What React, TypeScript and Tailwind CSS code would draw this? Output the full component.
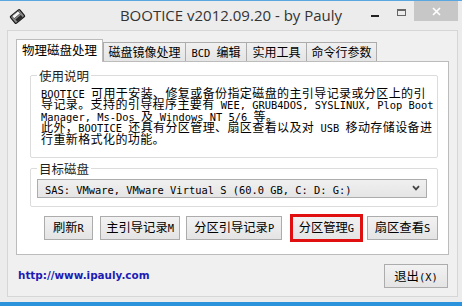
import type { ReactNode } from 'react'

// Latin runs use a narrow mono face, the rest a CJK face
function Mixed({ text }: { text: string }) {
  const parts = text.split(/([\x20-\x7e]+)/).filter(Boolean)
  return (
    <>
      {parts.map((p, i) =>
        /^[\x20-\x7e]+$/.test(p) ? (
          <span key={i} className="font-['DejaVu_Sans_Mono',monospace] text-[10.4px] tracking-normal whitespace-pre">
            {p}
          </span>
        ) : (
          <span key={i}>{p}</span>
        ),
      )}
    </>
  )
}

function WinButton({ label, className = '' }: { label: string; className?: string }) {
  return (
    <button
      className={`flex h-[24px] items-center justify-center border border-[#acacac] bg-gradient-to-b from-[#f2f2f2] to-[#e4e4e4] text-[12.3px] text-black ${className}`}
    >
      <span className="leading-[14px]">
        <Mixed text={label} />
      </span>
    </button>
  )
}

function GroupBox({ title, children, className = '' }: { title: string; children: ReactNode; className?: string }) {
  return (
    <fieldset className={`rounded-[2px] border border-[#dcdcdc] ${className}`}>
      <legend className="ml-[6px] px-[2px] text-[12.5px] leading-[15px] text-[#1e1e1e]">{title}</legend>
      {children}
    </fieldset>
  )
}

const lines = [
  'BOOTICE 可用于安装、修复或备份指定磁盘的主引导记录或分区上的引',
  '导记录。支持的引导程序主要有 WEE, GRUB4DOS, SYSLINUX, Plop Boot',
  'Manager, Ms-Dos 及 Windows NT 5/6 等。',
  '此外，BOOTICE 还具有分区管理、扇区查看以及对 USB 移动存储设备进',
  '行重新格式化的功能。',
]

const tabs = [
  { label: '磁盘镜像处理', w: 'w-[83px]' },
  { label: 'BCD 编辑', w: 'w-[62px]' },
  { label: '实用工具', w: 'w-[61px]' },
  { label: '命令行参数', w: 'w-[71px]' },
]

function AppIcon() {
  return (
    <svg width="17" height="17" viewBox="0 0 17 17">
      <g transform="rotate(-40 8.5 8.5)">
        <rect x="2.5" y="4" width="12" height="9" rx="1" fill="#8a8a8a" stroke="#1a1a1a" strokeWidth="1.2" />
        <rect x="4.5" y="4.6" width="8" height="3.4" fill="#f4f4f4" stroke="#333" strokeWidth="0.6" />
        <rect x="5" y="9.5" width="7" height="3" fill="#2a2a2a" />
      </g>
    </svg>
  )
}

export default function App() {
  return (
    <div className="flex h-[306px] w-[462px] flex-col overflow-hidden bg-[#ececec] font-['Noto_Sans_CJK_SC',sans-serif]">
      <div className="h-px bg-[#5aa6e0]" />

      {/* title bar */}
      <div className="grid h-[29px] grid-cols-[1fr_auto_1fr]">
        <div className="flex items-start pl-[9px] pt-[7px]">
          <AppIcon />
        </div>
        <div className="flex items-center pb-[1px] font-['Open_Sans',sans-serif] text-[15px] text-[#333]">
          BOOTICE v2012.09.20 - by Pauly
        </div>
        <div className="flex items-start justify-end pr-[4px]">
          <div className="flex h-[20px] w-[26px] items-center justify-center pt-[9px]">
            <div className="h-[2px] w-[8px] bg-[#222]" />
          </div>
          <div className="flex h-[20px] w-[26px] items-start justify-center pt-[8px]">
            <div className="h-[7px] w-[9px] border border-[#666] border-t-2" />
          </div>
          <div className="flex h-[20px] w-[44px] items-center justify-center bg-[#c7c7c7]">
            <svg width="9" height="9" viewBox="0 0 9 9">
              <path d="M1 1 L8 8 M8 1 L1 8" stroke="#fff" strokeWidth="1.6" />
            </svg>
          </div>
        </div>
      </div>

      {/* client area */}
      <div className="ml-[7px] mr-[4px] flex h-[267px] flex-col border border-[#d6d6d6] bg-[#f0f0f0] px-[8px] pt-[8px]">
        <div className="flex h-[22px] items-end">
          <div className="relative z-10 -mb-px flex h-[23px] w-[87px] items-center justify-center border border-b-0 border-[#bcbcbc] bg-white pb-[2px] text-[12.5px] text-black">
            物理磁盘处理
          </div>
          {tabs.map((t, i) => (
            <div
              key={t.label}
              className={`flex h-[19px] items-center justify-center border border-b-0 border-[#acacac] bg-gradient-to-b from-[#f0f0f0] to-[#e5e5e5] text-[12px] text-black ${t.w} ${i > 0 ? '-ml-px' : ''}`}
            >
              <span className="leading-[14px]">
                <Mixed text={t.label} />
              </span>
            </div>
          ))}
        </div>

        <div className="flex h-[194px] flex-col border border-[#bcbcbc] bg-white pl-[13px] pr-[10px] pt-[6px]">
          <GroupBox title="使用说明">
            <div className="mt-[4px] pb-[13px] pl-[10px] text-[12px] tracking-[0.4px] text-black">
              {lines.map((l) => (
                <div key={l} className="h-[11.4px] whitespace-nowrap leading-[11.4px]">
                  <Mixed text={l} />
                </div>
              ))}
            </div>
          </GroupBox>

          <GroupBox title="目标磁盘" className="mt-[3px]">
            <div className="px-[6px] pb-[8px] pt-[3px] pr-[10px]">
              <div className="flex h-[19px] items-center justify-between border border-[#acacac] bg-gradient-to-b from-[#f0f0f0] to-[#e5e5e5] pl-[7px] pr-[6px] text-black">
                <span className="leading-[14px]">
                  <Mixed text="SAS: VMware, VMware Virtual S (60.0 GB, C: D: G:)" />
                </span>
                <svg width="8" height="6" viewBox="0 0 8 6">
                  <path d="M1 1.2 L4 4.4 L7 1.2" fill="none" stroke="#444" strokeWidth="1.8" />
                </svg>
              </div>
            </div>
          </GroupBox>

          <div className="mt-[9px] flex h-[24px] items-center">
            <WinButton label="刷新R" className="ml-[14px] w-[50px]" />
            <WinButton label="主引导记录M" className="ml-[7px] w-[83px]" />
            <WinButton label="分区引导记录P" className="ml-[6px] w-[98px]" />
            <WinButton label="分区管理G" className="ml-[8px] h-[28px] w-[75px] border-[3px] border-[#e01010]" />
            <WinButton label="扇区查看S" className="ml-[4px] w-[73px]" />
          </div>
        </div>

        <div className="mr-px mt-[9px] flex items-center justify-between">
          <a className="pl-[2px] font-['DejaVu_Sans',sans-serif] text-[10.4px] font-bold text-[#1c1cb4]">
            http://www.ipauly.com
          </a>
          <WinButton label="退出(X)" className="h-[22px] w-[64px]" />
        </div>
      </div>

      <div className="h-[5px]" />
      <div className="h-[4px] bg-[#2b93dc]" />
    </div>
  )
}
